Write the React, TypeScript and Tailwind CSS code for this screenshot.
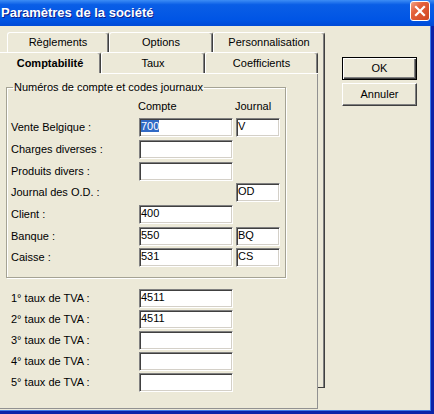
const font = "font-['Liberation_Sans',Arial,sans-serif]"

type Row = { label: string; compte: string | null; journal: string | null; sel?: boolean; mt: string }

const rows: Row[] = [
  { label: 'Vente Belgique :', compte: '700', journal: 'V', sel: true, mt: 'mt-0' },
  { label: 'Charges diverses :', compte: '', journal: null, mt: 'mt-[3px]' },
  { label: 'Produits divers :', compte: '', journal: null, mt: 'mt-[3px]' },
  { label: 'Journal des O.D. :', compte: null, journal: 'OD', mt: 'mt-[2px]' },
  { label: 'Client :', compte: '400', journal: null, mt: 'mt-[3px]' },
  { label: 'Banque :', compte: '550', journal: 'BQ', mt: 'mt-[3px]' },
  { label: 'Caisse :', compte: '531', journal: 'CS', mt: 'mt-[2px]' },
]

const tva = [
  { label: '1° taux de TVA :', value: '4511' },
  { label: '2° taux de TVA :', value: '4511' },
  { label: '3° taux de TVA :', value: '' },
  { label: '4° taux de TVA :', value: '' },
  { label: '5° taux de TVA :', value: '' },
]

function Field({ value, selected, width }: { value: string; selected?: boolean; width: string }) {
  return (
    <div
      className={`${width} h-[19px] bg-white border border-t-[#808080] border-l-[#808080] border-r-white border-b-white shadow-[inset_1px_1px_0_#404040,inset_-1px_-1px_0_#d4d0c8] pl-[1px] pt-px leading-[13px] text-black`}
    >
      {selected ? <span className="bg-[#316ac5] text-white">{value}</span> : value}
    </div>
  )
}

function TopTab({ label, width }: { label: string; width: string }) {
  return (
    <div
      className={`${width} h-full flex items-center justify-center border-t border-l border-r border-t-white border-l-white border-r-[#404040] shadow-[inset_-1px_0_0_#808080] rounded-t-[3px]`}
    >
      {label}
    </div>
  )
}

function BottomTab({ label, width, selected }: { label: string; width: string; selected?: boolean }) {
  return (
    <div className={`${width} h-full flex flex-col`}>
      <div
        className={
          selected
            ? 'flex-1 flex items-center justify-center font-bold border-t border-r border-t-white border-r-[#404040] shadow-[inset_-1px_0_0_#808080] rounded-tr-[3px]'
            : 'flex-1 flex items-center justify-center border-t border-l border-r border-t-white border-l-white border-r-[#404040] shadow-[inset_-1px_0_0_#808080] rounded-t-[3px]'
        }
      >
        {label}
      </div>
      <div className={selected ? 'h-px' : 'h-px bg-white'} />
    </div>
  )
}

export default function App() {
  return (
    <div className={`${font} w-[434px] h-[414px] bg-[#ece9d8] text-[11px] text-black flex flex-col overflow-hidden`}>
      {/* Title bar */}
      <div className="h-[26px] flex items-center justify-between pl-px pr-[4px] bg-[linear-gradient(to_bottom,#3d8df5_0%,#0a5ee6_18%,#0055e5_75%,#004ad6_100%)]">
        <span className="text-white font-bold text-[13px] [text-shadow:1px_1px_0_#0f1f8a]">Paramètres de la société</span>
        <div className="w-[20px] h-[20px] -mt-[4px] rounded-[3px] border border-white bg-[linear-gradient(135deg,#f2a486_0%,#e4613c_35%,#cf4520_100%)] flex items-center justify-center">
          <svg width="12" height="12" viewBox="0 0 12 12">
            <path d="M2 2 L10 10 M10 2 L2 10" stroke="#fff" strokeWidth="2.2" strokeLinecap="square" />
          </svg>
        </div>
      </div>

      {/* Window body with blue frame */}
      <div className="h-[388px] flex flex-col border-r-[3px] border-b-[3px] border-[#0a23a8]">
        <div className="flex-1 flex border-r border-b border-[#3c7ae8]">
          {/* Tab control */}
          <div className="w-[325px] flex flex-col pt-[6px]">
            <div className="h-[20px] flex pl-[7px]">
              <TopTab label="Règlements" width="w-[102px]" />
              <TopTab label="Options" width="w-[104px]" />
              <TopTab label="Personnalisation" width="w-[112px]" />
            </div>
            <div className="flex">
              <div className="w-[318px] flex flex-col">
                <div className="h-[22px] flex">
                  <BottomTab label="Comptabilité" width="w-[101px]" selected />
                  <BottomTab label="Taux" width="w-[104px]" />
                  <BottomTab label="Coefficients" width="w-[113px]" />
                </div>
                {/* Panel */}
                <div className="h-[335px] border-r border-b border-[#919191] pt-[7px]">
                  <fieldset className="ml-[6px] w-[280px] border border-[#a5a394] shadow-[inset_1px_1px_0_#fff,1px_1px_0_#fff] pb-[10px]">
                    <legend className="ml-[6px] px-px leading-[13px]">Numéros de compte et codes journaux</legend>
                    <div className="grid grid-cols-[125px_94px_44px] gap-x-[3px] pl-[4px] pt-[6px] h-[19px] leading-[13px]">
                      <span />
                      <span className="-ml-px">Compte</span>
                      <span className="-ml-px">Journal</span>
                    </div>
                    <div className="pl-[4px] pt-[5px] flex flex-col">
                      {rows.map((r) => (
                        <div key={r.label} className={`${r.mt} h-[19px] grid grid-cols-[125px_94px_44px] gap-x-[3px] items-center`}>
                          <span>{r.label}</span>
                          {r.compte !== null ? <Field value={r.compte} selected={r.sel} width="w-[94px]" /> : <span />}
                          {r.journal !== null ? <Field value={r.journal} width="w-[44px]" /> : <span />}
                        </div>
                      ))}
                    </div>
                  </fieldset>

                  <div className="mt-[11px] pl-[11px] flex flex-col gap-[2px]">
                    {tva.map((t) => (
                      <div key={t.label} className="h-[19px] flex items-center">
                        <span className="w-[128px]">{t.label}</span>
                        <Field value={t.value} width="w-[94px]" />
                      </div>
                    ))}
                  </div>
                </div>
              </div>
              <div className="w-[7px] h-[336px] border-r border-b border-[#404040] shadow-[inset_-1px_0_0_#808080]" />
            </div>
          </div>

          {/* Buttons */}
          <div className="flex-1 flex flex-col gap-[3px] pt-[31px] pl-[17px]">
            <button className="w-[75px] h-[23px] bg-[#ece9d8] border border-black shadow-[inset_1px_1px_0_#fff,inset_-1px_-1px_0_#404040,inset_-2px_-2px_0_#808080] text-[11px]">
              OK
            </button>
            <button className="w-[75px] h-[23px] bg-[#ece9d8] border border-t-white border-l-white border-r-[#404040] border-b-[#404040] shadow-[inset_-1px_-1px_0_#808080] text-[11px]">
              Annuler
            </button>
          </div>
        </div>
      </div>
    </div>
  )
}
